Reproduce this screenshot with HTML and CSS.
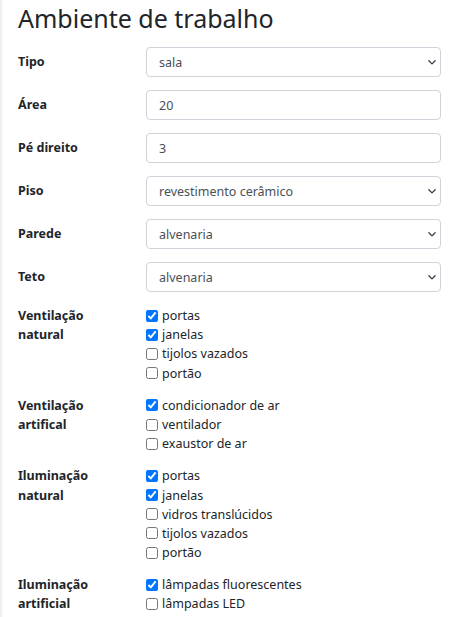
FILE: index.html
```html
<!DOCTYPE html>
<html lang="pt">
<head>
<meta charset="utf-8">
<title>Ambiente de trabalho</title>
<link rel="stylesheet" href="styles.css">
</head>
<body>
<main class="page">
  <h1 class="title">Ambiente de trabalho</h1>
  <form class="form">
    <div class="row">
      <label class="label" for="tipo">Tipo</label>
      <div class="select-wrap">
        <select id="tipo" class="control"><option>sala</option></select>
        <svg class="chevron" viewBox="0 0 16 16" width="10" height="10"><path d="M3 6l5 5 5-5" fill="none" stroke="#343a40" stroke-width="2" stroke-linecap="round" stroke-linejoin="round"/></svg>
      </div>
    </div>
    <div class="row">
      <label class="label" for="area">Área</label>
      <input id="area" class="control" type="text" value="20">
    </div>
    <div class="row">
      <label class="label" for="pe">Pé direito</label>
      <input id="pe" class="control" type="text" value="3">
    </div>
    <div class="row">
      <label class="label" for="piso">Piso</label>
      <div class="select-wrap">
        <select id="piso" class="control"><option>revestimento cerâmico</option></select>
        <svg class="chevron" viewBox="0 0 16 16" width="10" height="10"><path d="M3 6l5 5 5-5" fill="none" stroke="#343a40" stroke-width="2" stroke-linecap="round" stroke-linejoin="round"/></svg>
      </div>
    </div>
    <div class="row">
      <label class="label" for="parede">Parede</label>
      <div class="select-wrap">
        <select id="parede" class="control"><option>alvenaria</option></select>
        <svg class="chevron" viewBox="0 0 16 16" width="10" height="10"><path d="M3 6l5 5 5-5" fill="none" stroke="#343a40" stroke-width="2" stroke-linecap="round" stroke-linejoin="round"/></svg>
      </div>
    </div>
    <div class="row">
      <label class="label" for="teto">Teto</label>
      <div class="select-wrap">
        <select id="teto" class="control"><option>alvenaria</option></select>
        <svg class="chevron" viewBox="0 0 16 16" width="10" height="10"><path d="M3 6l5 5 5-5" fill="none" stroke="#343a40" stroke-width="2" stroke-linecap="round" stroke-linejoin="round"/></svg>
      </div>
    </div>

    <div class="row row-check">
      <div class="label">Ventilação natural</div>
      <div class="checks">
        <label class="check"><input type="checkbox" checked><span>portas</span></label>
        <label class="check"><input type="checkbox" checked><span>janelas</span></label>
        <label class="check"><input type="checkbox"><span>tijolos vazados</span></label>
        <label class="check"><input type="checkbox"><span>portão</span></label>
      </div>
    </div>
    <div class="row row-check">
      <div class="label">Ventilação artifical</div>
      <div class="checks">
        <label class="check"><input type="checkbox" checked><span>condicionador de ar</span></label>
        <label class="check"><input type="checkbox"><span>ventilador</span></label>
        <label class="check"><input type="checkbox"><span>exaustor de ar</span></label>
      </div>
    </div>
    <div class="row row-check">
      <div class="label">Iluminação natural</div>
      <div class="checks">
        <label class="check"><input type="checkbox" checked><span>portas</span></label>
        <label class="check"><input type="checkbox" checked><span>janelas</span></label>
        <label class="check"><input type="checkbox"><span>vidros translúcidos</span></label>
        <label class="check"><input type="checkbox"><span>tijolos vazados</span></label>
        <label class="check"><input type="checkbox"><span>portão</span></label>
      </div>
    </div>
    <div class="row row-check">
      <div class="label">Iluminação artificial</div>
      <div class="checks">
        <label class="check"><input type="checkbox" checked><span>lâmpadas fluorescentes</span></label>
        <label class="check"><input type="checkbox"><span>lâmpadas LED</span></label>
      </div>
    </div>
  </form>
</main>
</body>
</html>
```

FILE: styles.css
```css
html, body {
  margin: 0;
  padding: 0;
}
body {
  background: linear-gradient(90deg, #ebebeb 0, #f7f7f7 2px, #ffffff 4px);
  font-family: "Noto Sans", "Open Sans", sans-serif;
  font-size: 12.5px;
  line-height: 19.2px;
  color: #212529;
  overflow: hidden;
}
.page {
  padding: 0 20px 0 18px;
}
.title {
  margin: 0;
  padding: 2px 0 13px;
  font-size: 25px;
  line-height: 32px;
  font-weight: 400;
  color: #212529;
}
.form {
  display: flex;
  flex-direction: column;
}
.row {
  display: grid;
  grid-template-columns: 128px 1fr;
  align-items: center;
  margin-bottom: 13px;
}
.row-check {
  align-items: start;
  padding-top: 1px;
  margin-bottom: 12px;
}
.label {
  font-weight: 700;
  padding-right: 18px;
}
.control {
  box-sizing: border-box;
  width: 100%;
  height: 30px;
  margin: 0;
  padding: 0 12px;
  border: 1px solid #ced4da;
  border-radius: 4px;
  background: #fff;
  font-family: inherit;
  font-size: 12.5px;
  color: #495057;
  appearance: none;
  -webkit-appearance: none;
  outline: none;
}
.select-wrap {
  position: relative;
}
.chevron {
  position: absolute;
  right: 4px;
  top: 10px;
  width: 10px;
  height: 10px;
  pointer-events: none;
}
.checks {
  display: flex;
  flex-direction: column;
}
.check {
  display: flex;
  align-items: center;
  height: 19.2px;
}
.check input {
  width: 12px;
  height: 12px;
  margin: 0 4px 0 0;
  accent-color: #0075ff;
}
```
